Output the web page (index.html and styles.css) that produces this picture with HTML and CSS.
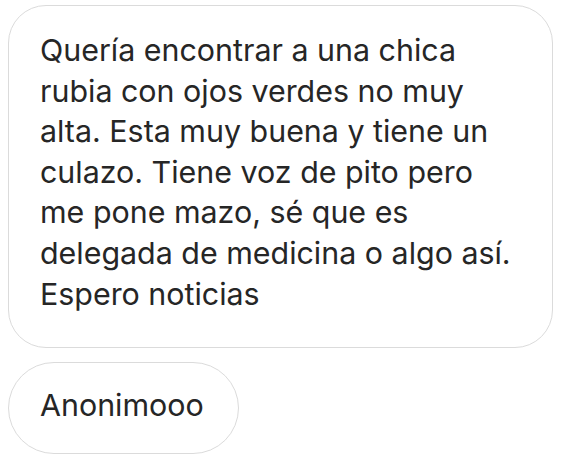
FILE: index.html
```html
<!DOCTYPE html>
<html lang="es">
<head>
<meta charset="utf-8">
<link rel="stylesheet" href="styles.css">
</head>
<body>
<div class="thread">
  <div class="bubble bubble-main">
    <span class="line">Quería encontrar a una chica</span>
    <span class="line">rubia con ojos verdes no muy</span>
    <span class="line">alta. Esta muy buena y tiene un</span>
    <span class="line">culazo. Tiene voz de pito pero</span>
    <span class="line">me pone mazo, sé que es</span>
    <span class="line">delegada de medicina o algo así.</span>
    <span class="line">Espero noticias</span>
  </div>
  <div class="bubble bubble-small">Anonimooo</div>
</div>
</body>
</html>
```
FILE: styles.css
```css
html, body {
  margin: 0;
  padding: 0;
  background: #ffffff;
}
body {
  font-family: Inter, "Noto Sans", sans-serif;
  color: #262626;
}
.thread {
  display: flex;
  flex-direction: column;
  align-items: flex-start;
  gap: 14px;
  padding: 5px 0 0 8px;
}
.bubble {
  box-sizing: border-box;
  background: #ffffff;
  border: 1.5px solid #dbdbdb;
  font-size: 30.4px;
  line-height: 40.6px;
}
.bubble-main {
  width: 545px;
  height: 343px;
  border-radius: 38px;
  padding: 24px 20px 0 31px;
}
.line {
  display: block;
  white-space: nowrap;
}
.bubble-small {
  height: 92px;
  border-radius: 46px;
  padding: 22px 34px 0 31px;
}
```
